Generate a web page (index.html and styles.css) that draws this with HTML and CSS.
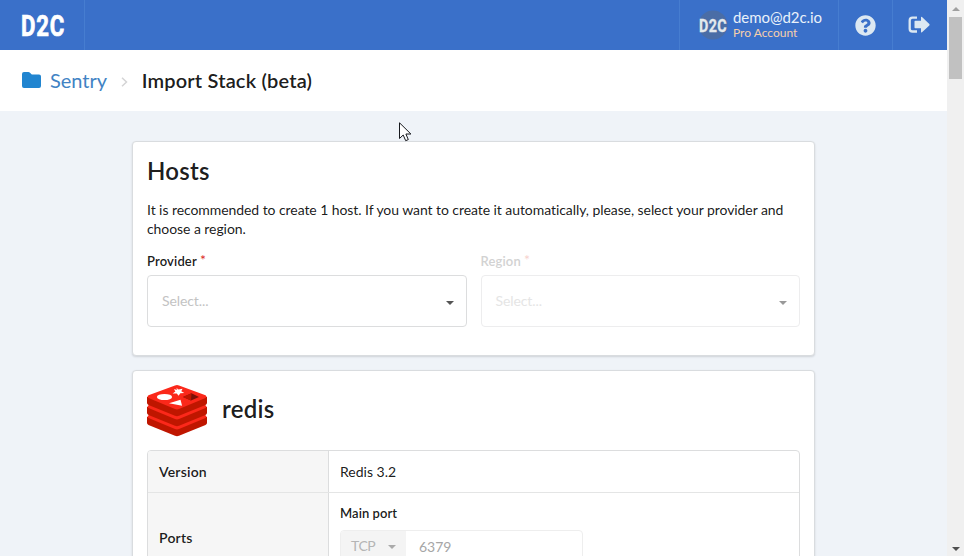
FILE: index.html
```html
<!DOCTYPE html>
<html lang="en">
<head>
<meta charset="utf-8">
<title>Import Stack</title>
<link rel="stylesheet" href="styles.css">
</head>
<body>
<div class="app">
  <div class="page">
    <header class="navbar">
      <a class="brand"><svg width="46" height="40" viewBox="0 0 46 40"><text class="logo-text" font-size="29" x="0" y="30.500" textLength="44" lengthAdjust="spacingAndGlyphs">D2C</text></svg></a>
      <div class="account">
        <svg class="avatar" width="30" height="34" viewBox="0 -2 30 34"><circle cx="15" cy="15" r="14.500" fill="#4a6da6"/><text class="avatar-text" font-size="19" x="1" y="22" textLength="28" lengthAdjust="spacingAndGlyphs">D2C</text></svg>
        <div class="who"><span class="email">demo@d2c.io</span><span class="plan">Pro Account</span></div>
      </div>
      <a class="nav-icon help"><svg width="21" height="21" viewBox="0 0 512 512"><path fill="#dce8f2" d="M504 256c0 137-111 248-248 248S8 393 8 256 119 8 256 8s248 111 248 248zM262.700 90c-54.500 0-89.300 23-116.500 63.800-3.500 5.300-2.400 12.400 2.700 16.300l34.700 26.300c5.200 3.900 12.600 3 16.700-2.100 17.900-22.700 30.100-35.800 57.300-35.800 20.400 0 45.700 13.100 45.700 33 0 15-12.400 22.700-32.500 34C247.100 238.500 216 254.900 216 296v4c0 6.600 5.400 12 12 12h56c6.600 0 12-5.400 12-12v-1.300c0-28.500 83.200-29.600 83.200-106.700 0-58-60.200-102-116.500-102zM256 338c-25.400 0-46 20.600-46 46s20.600 46 46 46 46-20.600 46-46-20.600-46-46-46z"/></svg></a>
      <a class="nav-icon logout"><svg width="22" height="20" viewBox="0 0 22 20"><path fill="none" stroke="#dce8f2" stroke-width="2.300" d="M9 2.700H4.500Q1.700 2.700 1.700 5.500V13.700Q1.700 16.500 4.500 16.500H9"/><path fill="#dce8f2" d="M6.500 6.500q0-.8.800-.8H13V2.400q0-1.200 1-.5l7.300 7.100q.7.700 0 1.400L14 17.300q-1 .8-1-.5v-3.500H7.300q-.8 0-.8-.8z"/></svg></a>
    </header>
    <nav class="crumbs">
      <svg class="folder" width="19" height="16" viewBox="0 0 19 16"><path fill="#2185d0" d="M2 0h4.500q.7 0 1.200.5L9.800 2.600H17q2 0 2 2V14q0 2-2 2H2q-2 0-2-2V2Q0 0 2 0z"/></svg>
      <a class="crumb-link">Sentry</a>
      <svg class="chevron" width="7" height="10" viewBox="0 0 7 10"><path fill="none" stroke="#d4d4d5" stroke-width="1.500" d="M1 .7 5.500 5 1 9.300"/></svg>
      <h1 class="crumb-current">Import Stack (beta)</h1>
    </nav>
    <main class="content">
      <section class="card hosts">
        <h2>Hosts</h2>
        <p>It is recommended to create 1 host. If you want to create it automatically, please, select your provider and choose a region.</p>
        <div class="fields">
          <div class="field"><label>Provider<sup>*</sup></label><div class="select"><span>Select...</span><i class="caret"></i></div></div>
          <div class="field disabled"><label>Region<sup>*</sup></label><div class="select"><span>Select...</span><i class="caret"></i></div></div>
        </div>
      </section>
      <section class="card service">
        <div class="service-head">
          <svg width="60" height="52" viewBox="0 0 60 52">
            <path fill="#bf1600" d="M0 32v6q0 1.200 1.500 2L28 50.800q2 .8 4 0L58.500 40q1.500-.8 1.500-2v-6z"/>
            <path fill="#fb281a" d="M1.500 30.200 30 21l28.500 9.200q2 1.300 0 2.800L32 44q-2 .8-4 0L1.500 33q-2-1.500 0-2.800z"/>
            <path fill="#bf1600" d="M0 22v6q0 1.200 1.500 2L28 40.800q2 .8 4 0L58.500 30q1.500-.8 1.500-2v-6z"/>
            <path fill="#fb281a" d="M1.500 20.200 30 11l28.500 9.200q2 1.300 0 2.800L32 34q-2 .8-4 0L1.500 23q-2-1.500 0-2.800z"/>
            <path fill="#bf1600" d="M0 12v6q0 1.200 1.500 2L28 30.800q2 .8 4 0L58.500 20q1.500-.8 1.500-2v-6z"/>
            <path fill="#fb281a" d="M1.500 10.200 28 .5q2-.8 4 0l26.500 9.700q2 1.300 0 2.800L32 24q-2 .8-4 0L1.500 13q-2-1.500 0-2.800z"/>
            <ellipse cx="17.500" cy="12" rx="7.600" ry="3.100" fill="#fff"/>
            <path fill="#fff" d="m29.200 2.800 2.300 1.800 4-.8-1.200 2.400 3 1.900-4 .2-1.700 2.500-1.800-2.400-4.200.1 2.800-2-1.500-2.200 3.400.5zM22 18.300l11.500-3.500 1.600 6z"/>
            <path fill="#7e1008" d="m36 12 8.500-3.800 7.500 3.700-8 3.500z"/><path fill="#bf1600" d="m36 12 8.500-3.800-.5 7.200z"/>
          </svg>
          <h2>redis</h2>
        </div>
        <div class="table">
          <div class="row version"><div class="key">Version</div><div class="value">Redis 3.2</div></div>
          <div class="row ports"><div class="key">Ports</div><div class="value">
            <div class="port-label">Main port</div>
            <div class="port"><div class="protocol">TCP<i class="caret"></i></div><div class="number">6379</div></div>
          </div></div>
        </div>
      </section>
    </main>
  </div>
  <div class="scrollbar"><i class="up"></i><div class="thumb"></div><i class="down"></i></div>
</div>
<svg class="cursor" width="13" height="20" viewBox="0 0 13 20"><path fill="#fff" stroke="#16181d" stroke-width="1" d="M.5.800V16.500L4.200 13l2.500 5.700 2.600-1.100L6.900 12h5z"/></svg>
</body>
</html>
```
FILE: styles.css
```css
* { box-sizing: border-box; }
body { margin: 0; font: 14px/19px Lato, "Liberation Sans", sans-serif; color: rgba(0,0,0,.9); overflow: hidden; }
h1, h2, p { margin: 0; }
svg { display: block; flex: none; overflow: visible; }
.app { display: flex; height: 556px; overflow: hidden; }
.page { flex: 1; background: #eff3f8; overflow: hidden; }
.navbar { display: flex; height: 50px; background: #3a70c9; }
.brand { display: flex; width: 85px; padding: 5px 0 0 21px; border-right: 1px solid #467dd0; margin-right: auto; }
.logo-text { font-family: Roboto, sans-serif; font-weight: 700; letter-spacing: 1px; fill: #fff; stroke: #fff; stroke-width: .7px; }
.avatar-text { font-family: Roboto, sans-serif; font-weight: 700; letter-spacing: .5px; fill: #e4e9ed; stroke: #e4e9ed; stroke-width: .3px; }
.account { display: flex; width: 159px; padding: 8px 0 0 18px; border-left: 1px solid #467dd0; gap: 5px; }
.who { display: flex; flex-direction: column; margin-top: -1px; }
.email { font-size: 15px; line-height: 20px; color: #e9f1fa; letter-spacing: -.05px; }
.plan { font-size: 12px; line-height: 12px; color: #f5cfab; }
.nav-icon { display: flex; align-items: center; justify-content: center; width: 54px; border-left: 1px solid #467dd0; }
.help { padding-right: 1px; }
.logout { width: 55px; padding-right: 2px; }
.crumbs { display: flex; align-items: center; height: 61px; padding: 0 22px 2px; background: #fff; font-size: 20px; line-height: 26px; }
.folder { margin-right: 9px; }
.crumb-link { color: #4183c4; }
.chevron { margin: 4px 14px 0; }
.crumb-current { font-size: 20px; font-weight: 600; letter-spacing: .18px; margin-left: -.5px; }
.content { width: 683px; margin: 30px auto 0; }
.card { background: #fff; border: 1px solid #d9dcdf; border-radius: 4px; padding: 14px; box-shadow: 0 1px 2px rgba(34,36,38,.15); }
h2 { font-size: 24px; line-height: 31px; font-weight: 600; letter-spacing: .25px; }
.hosts { height: 215px; padding-top: 13px; margin-bottom: 14px; }
.hosts p { margin-top: 14px; letter-spacing: -.07px; }
.fields { display: flex; gap: 14px; margin-top: 14px; }
.field { flex: 1; }
label { display: block; font-size: 13px; line-height: 18px; font-weight: 600; letter-spacing: .15px; margin-bottom: 5px; }
sup { color: #db2828; font-size: 14px; line-height: 0; font-weight: 400; vertical-align: 1px; margin-left: 3px; }
.select { display: flex; align-items: center; justify-content: space-between; height: 52px; padding: 0 12px 0 14px; border: 1px solid #dcddde; border-radius: 4px; color: #c3c3c3; }
.select span { margin-top: -2px; letter-spacing: -.1px; }
.caret { width: 0; height: 0; border: 4px solid transparent; border-top-color: #555; border-bottom: 0; margin-top: 3px; }
.disabled label { color: #d2d2d2; }
.disabled sup { color: #f7d2ce; }
.disabled .select { border-color: #ededee; color: #e5e5e5; }
.disabled .caret { border-top-color: #999; }
.service-head { display: flex; gap: 15px; height: 52px; margin-bottom: 13px; }
.service-head h2 { margin-top: 8px; }
.table { border: 1px solid #dcddde; border-radius: 4px; overflow: hidden; }
.row { display: flex; }
.version { height: 42px; border-bottom: 1px solid #e4e5e5; }
.key { display: flex; align-items: center; width: 181px; padding-left: 11px; background: #f6f6f6; border-right: 1px solid #dcddde; font-weight: 600; letter-spacing: .2px; }
.value { flex: 1; padding: 11px; }
.ports { height: 89px; }
.port-label { font-size: 13px; line-height: 18px; font-weight: 600; letter-spacing: .05px; margin-bottom: 8px; }
.port { display: flex; width: 243px; height: 34px; border: 1px solid #eee; border-radius: 4px; color: #a6a6a6; line-height: 32px; overflow: hidden; }
.protocol { display: flex; align-items: center; justify-content: space-between; width: 65px; padding: 0 10px; background: #f4f4f4; color: #b5b5b5; letter-spacing: -.4px; line-height: 30px; padding-bottom: 2px; }
.protocol .caret { border-top-color: #aaa; margin-top: 1px; }
.number { padding-left: 13px; }
.scrollbar { display: flex; flex-direction: column; align-items: center; width: 17px; background: #f0f0f0; padding: 7px 0 5px; }
.up { border: 4px solid transparent; border-top: 0; border-bottom-color: #a0a0a0; }
.thumb { width: 13px; height: 62px; margin: 6px 0 auto; background: #c1c1c1; }
.down { border: 4px solid transparent; border-bottom: 0; border-top-color: #4f4f4f; }
.cursor { position: absolute; left: 399px; top: 122px; }
```
